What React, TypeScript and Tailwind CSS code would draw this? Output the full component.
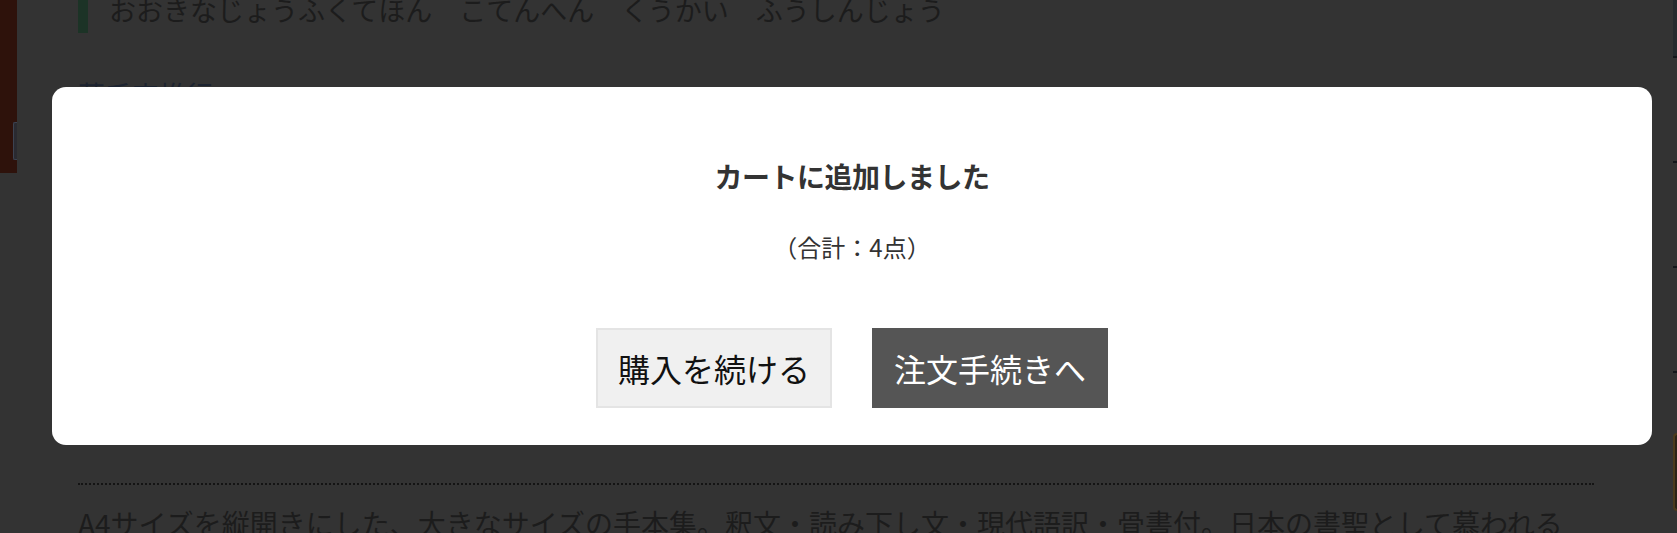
const jp = "font-['Noto_Sans_CJK_JP','Noto_Sans',sans-serif]";

const RightRail = () => {
  return (
    <div className="flex w-[4px] flex-col">
      <div className="h-[56px] bg-[#262a2d]" />
      <div className="h-[105px] border-t-2 border-dotted border-[#14161a]" />
      <div className="h-[105px] border-t-2 border-dotted border-[#14161a]" />
      <div className="h-[105px] border-t-2 border-dotted border-[#14161a]" />
      <div className="h-[62px] border-t-2 border-dotted border-[#14161a]" />
      <div className="h-[78px] rounded-l-[4px] border-2 border-r-0 border-[#4a3a1c] bg-[#2a2216]" />
    </div>
  );
};

const CartModal = () => {
  return (
    <div className="absolute top-[87px] left-[52px] w-[1600px] rounded-[14px] bg-white pt-[69px] pb-[37px] flex flex-col items-center text-[#333]">
      <h2 className="text-[28px] font-bold leading-[40px] tracking-[-0.5px]">カートに追加しました</h2>
      <p className="mt-[32px] text-[24px] leading-[38px]">（合計：4点）</p>
      <div className="mt-[62px] flex gap-[40px]">
        <button className="h-[80px] w-[236px] border-2 border-[#e4e4e4] bg-[#f0f0f0] text-[32px] text-[#111]">
          購入を続ける
        </button>
        <button className="h-[80px] w-[236px] bg-[#555555] text-[32px] text-white">
          注文手続きへ
        </button>
      </div>
    </div>
  );
};

export default function App() {
  return (
    <div className={`relative h-[533px] w-full overflow-hidden bg-[#333333] ${jp}`}>
      <div className="flex">
        <div className="flex h-[173px] w-[17px] flex-col bg-[#2e120b]">
          <div className="ml-[13px] mt-[122px] h-[38px] w-[4px] rounded-l-[2px] border border-r-0 border-[#3c4250] bg-[#2a2a30]" />
        </div>

        <main className="ml-[61px] flex w-[1516px] flex-col">
          <div className="-mt-[6px] flex h-[39px] items-start border-l-[10px] border-[#1c3326] pl-[21px]">
            <h1 className="-mt-[1px] text-[27px] leading-[33px] text-[#1c1c1c]">
              おおきなじょうふくてほん　こてんへん　くうかい　ふうしんじょう
            </h1>
          </div>
          <a className="mt-[42px] text-[27px] leading-[40px] text-[#1c2330]">蒼千字推行</a>
          <div className="h-[368px]" />
          <div className="border-t-2 border-dotted border-[#141414]" />
          <p className="mt-[17px] whitespace-nowrap text-[28px] leading-[42px] text-[#1c1c1c]">
            A4サイズを縦開きにした、大きなサイズの手本集。釈文・読み下し文・現代語訳・骨書付。日本の書聖として慕われる
          </p>
        </main>

        <div className="flex-1" />
        <RightRail />
      </div>

      <CartModal />
    </div>
  );
}
